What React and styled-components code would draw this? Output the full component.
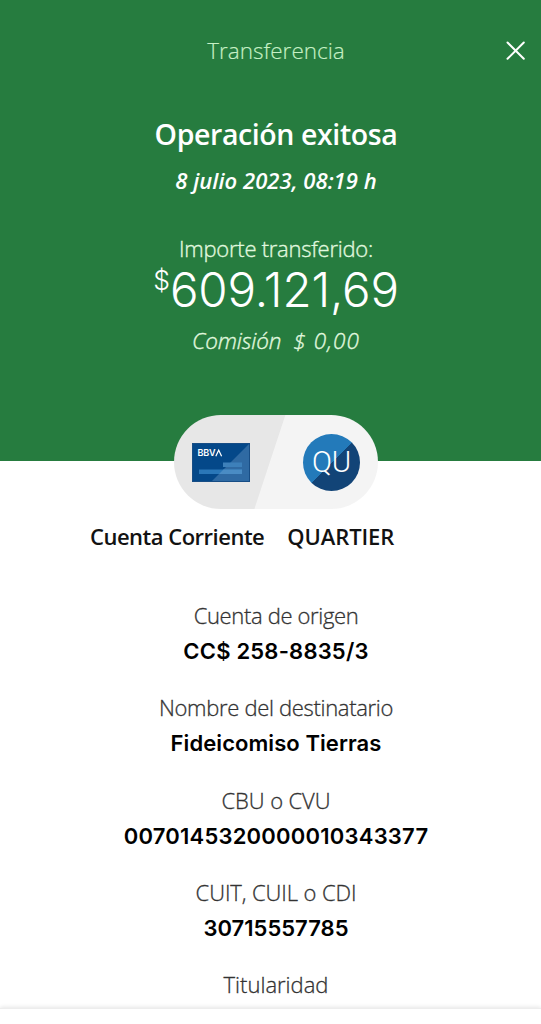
import React from "react";
import styled, { createGlobalStyle } from "styled-components";

const GlobalStyle = createGlobalStyle`
  * {
    box-sizing: border-box;
  }
  body {
    margin: 0;
    background-color: #fff;
    font-family: "Open Sans", "Noto Sans", sans-serif;
  }
`;

const Screen = styled.main`
  width: 541px;
  height: 1024px;
  overflow: hidden;
  display: flex;
  flex-direction: column;
  background-color: #fff;
`;

const Header = styled.header`
  height: 461px;
  flex-shrink: 0;
  display: flex;
  flex-direction: column;
  align-items: center;
  padding-left: 11px;
  background-color: #267c3f;
  color: #fff;
`;

const TopBar = styled.div`
  align-self: stretch;
  display: grid;
  grid-template-columns: 51px 1fr 51px;
  align-items: center;
  justify-items: center;
  height: 100px;
`;

const Text = styled.p`
  margin: 0;
  white-space: pre;
  font-family: ${(props) => props.$font || "inherit"};
  font-size: ${(props) => props.$size || 22}px;
  line-height: ${(props) => props.$line || 35}px;
  font-weight: ${(props) => props.$weight || 300};
  font-style: ${(props) => (props.$italic ? "italic" : "normal")};
  letter-spacing: ${(props) => props.$track || 0}px;
  color: ${(props) => props.$color || "inherit"};
  -webkit-text-stroke: ${(props) => props.$stroke || 0}px;
`;

const CloseButton = styled.button`
  width: 24px;
  height: 24px;
  padding: 0;
  border: none;
  background: transparent;
  color: #fff;
  cursor: pointer;
  svg {
    display: block;
  }
`;

const Transfer = styled.section`
  margin: 41px 0 9px;
  display: flex;
  flex-direction: column;
  align-items: center;
`;

const Amount = styled.div`
  display: flex;
  align-items: flex-start;
  height: 56px;
`;

const Fee = styled.div`
  display: flex;
  gap: 12px;
`;

const Pill = styled.div`
  width: 204px;
  height: 94px;
  margin: -46px 0 0 174px;
  flex-shrink: 0;
  display: flex;
  align-items: center;
  justify-content: space-between;
  padding: 0 18px;
  border-radius: 47px;
  background: linear-gradient(108.25deg, #e7e7e7 47.2%, #f4f4f4 47.6%);
`;

const Avatar = styled.div`
  width: 57px;
  height: 57px;
  display: flex;
  align-items: center;
  justify-content: center;
  border-radius: 50%;
  background: linear-gradient(135deg, #237aba 50%, #124477 50.8%);
  color: #fff;
`;

const Names = styled.div`
  display: flex;
  gap: 23px;
  padding-left: 90px;
  margin-top: 10px;
`;

const Details = styled.dl`
  margin: 44px 0 0;
  padding-left: 11px;
  display: flex;
  flex-direction: column;
  gap: 20.3px;
`;

const Detail = styled.div`
  display: flex;
  flex-direction: column;
  align-items: center;
`;

const Footer = styled.footer`
  height: 16px;
  margin-top: auto;
  flex-shrink: 0;
  background-color: #fff;
  border-top: 1px solid #ededed;
  box-shadow: 0 -1px 4px rgba(0, 0, 0, 0.1);
`;

const inter = "Inter, sans-serif";

const details = [
  { label: "Cuenta de origen", value: "CC$ 258-8835/3", labelTrack: -0.35, valueTrack: 0.2 },
  { label: "Nombre del destinatario", value: "Fideicomiso Tierras", labelTrack: -0.32, valueTrack: 0.07 },
  { label: "CBU o CVU", value: "0070145320000010343377", labelTrack: -0.1, valueTrack: 0.22 },
  { label: "CUIT, CUIL o CDI", value: "30715557785", labelTrack: -0.1 },
  { label: "Titularidad", labelTrack: 0 },
];

function Card() {
  return (
    <svg width="58" height="39" viewBox="0 0 58 39">
      <rect width="58" height="39" fill="#044889" />
      <path d="M19 39 58 0V39Z" fill="#2f6aa3" />
      <path d="M7 26.5H50V31H7Z" fill="#2a77b8" />
      <path d="M31 19.5H50V24H31Z" fill="#3d80ba" />
      <path d="M27 31 31.5 26.5H50V31Z" fill="#4a8cc4" />
      <text x="5.5" y="13.2" fontFamily="Inter" fontSize="9" fontWeight="600" fill="#fff" textLength="18">
        BBV
      </text>
      <path d="M23.8 13.2 26.7 7.2 29.6 13.2" fill="none" stroke="#fff" strokeWidth="1.2" />
      <rect x=".5" y=".5" width="57" height="38" fill="none" stroke="#174d85" />
    </svg>
  );
}

export default function App() {
  return (
    <Screen>
      <GlobalStyle />
      <Header>
        <TopBar>
          <span />
          <Text $size={22.5} $color="#c6f0c5" $stroke={0.15}>Transferencia</Text>
          <CloseButton aria-label="Cerrar">
            <svg width="24" height="24" viewBox="0 0 24 24">
              <path d="M3.5 4.5 19.8 20.8M19.8 4.5 3.5 20.8" stroke="#fff" strokeWidth="2" strokeLinecap="round" />
            </svg>
          </CloseButton>
        </TopBar>
        <Text $size={28.5} $line={68} $weight={600} $track={-0.4}>Operación exitosa</Text>
        <Text $size={22} $line={24} $weight={600} $track={0.05} $italic>8 julio 2023, 08:19 h</Text>
        <Transfer>
          <Text $line={30} $track={-0.25} $color="#e0f8df" $stroke={0.35}>Importe transferido:</Text>
          <Amount>
            <Text $font={inter} $size={26.5} $line={34}>$</Text>
            <Text $font={inter} $size={47.5} $line={54} $track={-0.15}>609.121,69</Text>
          </Amount>
        </Transfer>
        <Fee>
          <Text $size={22.5} $line={26} $track={-0.15} $color="#e0f8df" $stroke={0.35} $italic>Comisión</Text>
          <Text $size={22.5} $line={26} $track={1.1} $color="#e0f8df" $stroke={0.35} $italic>$ 0,00</Text>
        </Fee>
      </Header>
      <Pill>
        <Card />
        <Avatar>
          <Text $font="Roboto, sans-serif" $size={29.5} $line={56} $track={-0.3}>QU</Text>
        </Avatar>
      </Pill>
      <Names>
        <Text $weight={600} $track={-0.5} $color="#121212">Cuenta Corriente</Text>
        <Text $weight={600} $track={-0.1} $color="#121212">QUARTIER</Text>
      </Names>
      <Details>
        {details.map((item) => (
          <Detail key={item.label}>
            <Text as="dt" $track={item.labelTrack} $color="#333" $stroke={0.3}>{item.label}</Text>
            {item.value && (
              <Text as="dd" $font={inter} $line={37} $weight={600} $track={item.valueTrack} $color="#000">
                {item.value}
              </Text>
            )}
          </Detail>
        ))}
      </Details>
      <Footer />
    </Screen>
  );
}
